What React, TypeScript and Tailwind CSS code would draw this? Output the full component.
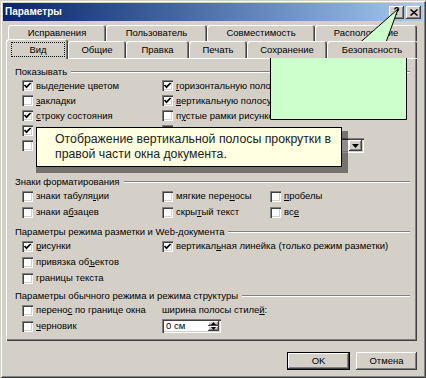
import React from "react";

type Opt = { text: string; on?: boolean; k?: number };

const raised =
  "shadow-[inset_-1px_-1px_#404040,inset_1px_1px_#ffffff,inset_-2px_-2px_#808080]";
const sunken =
  "shadow-[inset_1px_1px_#808080,inset_2px_2px_#404040,inset_-1px_-1px_#ffffff,inset_-2px_-2px_#d4d0c8]";

function Label({ text, k }: { text: string; k?: number }) {
  if (k === undefined) return <span className="whitespace-nowrap">{text}</span>;
  return (
    <span className="whitespace-nowrap">
      {text.slice(0, k)}
      <span className="underline">{text[k]}</span>
      {text.slice(k + 1)}
    </span>
  );
}

function Check({ on }: { on?: boolean }) {
  return (
    <span className={`relative w-[11px] h-[11px] bg-white shrink-0 ${sunken}`}>
      {on && (
        <svg className="absolute inset-0" width="11" height="11" viewBox="0 0 11 11">
          <path d="M2.5 5 L4.5 7.2 L8.6 3" stroke="#000" strokeWidth="1.7" fill="none" />
        </svg>
      )}
    </span>
  );
}

function Option({ o }: { o?: Opt }) {
  if (!o) return <div />;
  return (
    <div className="flex items-center gap-[3px]">
      <Check on={o.on} />
      {o.text && <Label text={o.text} k={o.k} />}
    </div>
  );
}

function Group({ title }: { title: string }) {
  return (
    <div className="flex items-center h-[13px] pl-[9px] pr-[7px]">
      <span className="whitespace-nowrap">{title}</span>
      <div className="ml-[4px] flex-1 h-[2px] border-t border-t-[#808080] border-b border-b-white" />
    </div>
  );
}

function Tab({ label, w }: { label: string; w: number }) {
  return (
    <div
      className="h-full rounded-t-[3px] bg-[#d4d0c8] flex items-center justify-center shadow-[inset_1px_1px_#ffffff,inset_-1px_0_#404040,inset_-2px_0_#808080]"
      style={{ width: w }}
    >
      <span className="whitespace-nowrap">{label}</span>
    </div>
  );
}

// rows 4 and 5 sit under the tooltip: only their checkboxes peek out
const show: [Opt, Opt | null][] = [
  [{ text: "выделение цветом", on: true, k: 4 }, { text: "горизонтальную полосу прокрутки", on: true, k: 0 }],
  [{ text: "закладки", k: 0 }, { text: "вертикальную полосу прокрутки", on: true, k: 0 }],
  [{ text: "строку состояния", on: true, k: 0 }, { text: "пустые рамки рисунков", k: 1 }],
  [{ text: "", on: true }, { text: "" }],
  [{ text: "" }, null],
];

export default function App() {
  return (
    <div className="relative w-[426px] h-[378px] overflow-hidden bg-[#d4d0c8] p-[3px] text-[9.5px] leading-none text-black font-['Liberation_Sans',Arial,sans-serif] shadow-[inset_1px_1px_#d4d0c8,inset_-1px_-1px_#404040,inset_2px_2px_#ffffff,inset_-2px_-2px_#808080]">
      {/* Title bar */}
      <div className="h-[18px] flex items-center bg-linear-to-r from-[#0a246a] to-[#a6caf0] pl-[2px] pr-[2px]">
        <span className="text-white font-bold text-[10px]">Параметры</span>
        <div className="ml-auto flex gap-[2px]">
          <div className={`w-[15px] h-[13px] bg-[#d4d0c8] flex items-center justify-center font-bold text-[10px] ${raised}`}>?</div>
          <div className={`w-[15px] h-[13px] bg-[#d4d0c8] flex items-center justify-center ${raised}`}>
            <svg width="8" height="7" viewBox="0 0 8 7">
              <path d="M0.5 0.5 L7.5 6.5 M7.5 0.5 L0.5 6.5" stroke="#000" strokeWidth="1.5" />
            </svg>
          </div>
        </div>
      </div>

      <div className="pl-[3px] pr-[6px]">
        {/* Tabs */}
        <div className="flex h-[16px] mt-[4px] pl-[2px]">
          <Tab label="Исправления" w={98} />
          <Tab label="Пользователь" w={101} />
          <Tab label="Совместимость" w={108} />
          <Tab label="Расположение" w={102} />
        </div>
        <div className="relative z-10 flex items-end h-[17px]">
          <div className="relative top-[1px] w-[62px] h-[20px] rounded-t-[3px] bg-[#d4d0c8] shadow-[inset_1px_1px_#ffffff,inset_-1px_0_#404040,inset_-2px_0_#808080]">
            <span className="ml-[5px] mt-[3px] w-[54px] h-[15px] border border-dotted border-black flex items-center justify-center">
              Вид
            </span>
          </div>
          <Tab label="Общие" w={58} />
          <Tab label="Правка" w={63} />
          <Tab label="Печать" w={58} />
          <Tab label="Сохранение" w={80} />
          <Tab label="Безопасность" w={90} />
        </div>

        {/* Panel */}
        <div className="h-[283px] pt-[7px] shadow-[inset_1px_1px_#ffffff,inset_-1px_-1px_#404040,inset_-2px_-2px_#808080]">
          <Group title="Показывать" />
          {show.map(([l, r], i) => (
            <div key={i} className="grid grid-cols-[140px_108px_1fr] pl-[16px] h-[15px] items-center">
              <Option o={l} />
              {r ? (
                <Option o={r} />
              ) : (
                <>
                  <div />
                  <div className={`w-[94px] h-[15px] bg-white flex justify-end items-center pr-[2px] ${sunken}`}>
                    <div className={`w-[13px] h-[11px] bg-[#d4d0c8] flex items-center justify-center ${raised}`}>
                      <svg width="7" height="4" viewBox="0 0 7 4">
                        <path d="M0 0 H7 L3.5 4 Z" fill="#000" />
                      </svg>
                    </div>
                  </div>
                </>
              )}
            </div>
          ))}
          <div className="h-[22px]" />

          <Group title="Знаки форматирования" />
          <div className="grid grid-cols-[140px_108px_1fr] pl-[16px] h-[16px] items-center">
            <Option o={{ text: "знаки табуляции", k: 12 }} />
            <Option o={{ text: "мягкие переносы", k: 11 }} />
            <Option o={{ text: "пробелы", k: 0 }} />
          </div>
          <div className="grid grid-cols-[140px_108px_1fr] pl-[16px] h-[16px] items-center">
            <Option o={{ text: "знаки абзацев", k: 7 }} />
            <Option o={{ text: "скрытый текст", k: 4 }} />
            <Option o={{ text: "все", k: 2 }} />
          </div>

          <div className="mt-[5px]">
            <Group title="Параметры режима разметки и Web-документа" />
          </div>
          <div className="grid grid-cols-[140px_1fr] pl-[16px] h-[16px] items-center">
            <Option o={{ text: "рисунки", on: true, k: 0 }} />
            <Option o={{ text: "вертикальная линейка (только режим разметки)", on: true, k: 8 }} />
          </div>
          <div className="grid grid-cols-[140px_1fr] pl-[16px] h-[16px] items-center">
            <Option o={{ text: "привязка объектов", k: 11 }} />
          </div>
          <div className="grid grid-cols-[140px_1fr] pl-[16px] h-[16px] items-center">
            <Option o={{ text: "границы текста" }} />
          </div>

          <div className="mt-[3px]">
            <Group title="Параметры обычного режима и режима структуры" />
          </div>
          <div className="grid grid-cols-[140px_1fr] pl-[16px] h-[16px] items-center">
            <Option o={{ text: "перенос по границе окна", k: 6 }} />
            <Label text="ширина полосы стилей:" k={19} />
          </div>
          <div className="grid grid-cols-[140px_1fr] pl-[16px] h-[16px] items-center">
            <Option o={{ text: "черновик", k: 0 }} />
            <div className={`w-[59px] h-[14px] bg-white flex items-center pr-[2px] ${sunken}`}>
              <span className="pl-[4px] mr-auto">0 см</span>
              <div className="flex flex-col">
                <div className={`w-[11px] h-[5px] bg-[#d4d0c8] flex items-center justify-center ${raised}`}>
                  <svg width="5" height="3" viewBox="0 0 5 3"><path d="M0 3 H5 L2.5 0 Z" fill="#000" /></svg>
                </div>
                <div className={`w-[11px] h-[5px] bg-[#d4d0c8] flex items-center justify-center ${raised}`}>
                  <svg width="5" height="3" viewBox="0 0 5 3"><path d="M0 0 H5 L2.5 3 Z" fill="#000" /></svg>
                </div>
              </div>
            </div>
          </div>
        </div>

        {/* Buttons */}
        <div className="flex justify-end gap-[6px] mt-[11px]">
          <div className={`w-[63px] h-[18px] bg-[#d4d0c8] border border-black flex items-center justify-center ${raised}`}>OK</div>
          <div className={`w-[61px] h-[18px] bg-[#d4d0c8] flex items-center justify-center ${raised}`}>Отмена</div>
        </div>
      </div>

      {/* Tooltip with shadow */}
      <div className="absolute left-[342px] top-[131px] w-[6px] h-[42px] bg-black/45" />
      <div className="absolute left-[36px] top-[167px] w-[306px] h-[6px] bg-black/45" />
      <div className="absolute left-[36px] top-[127px] w-[306px] h-[40px] bg-[#ffffe1] border border-black pl-[18px] pt-[4px] text-[12.3px] leading-[15px] text-[#222]">
        <div className="whitespace-nowrap">Отображение вертикальной полосы прокрутки в</div>
        <div className="whitespace-nowrap">правой части окна документа.</div>
      </div>

      {/* Green callout */}
      <svg className="absolute left-0 top-0 pointer-events-none" width="426" height="378">
        <path
          d="M270.5 50.5 H351 L398 9 L383 50.5 H406.5 V119.5 H270.5 Z"
          fill="#ccffcc"
          stroke="#000"
          strokeWidth="1"
        />
      </svg>
    </div>
  );
}
